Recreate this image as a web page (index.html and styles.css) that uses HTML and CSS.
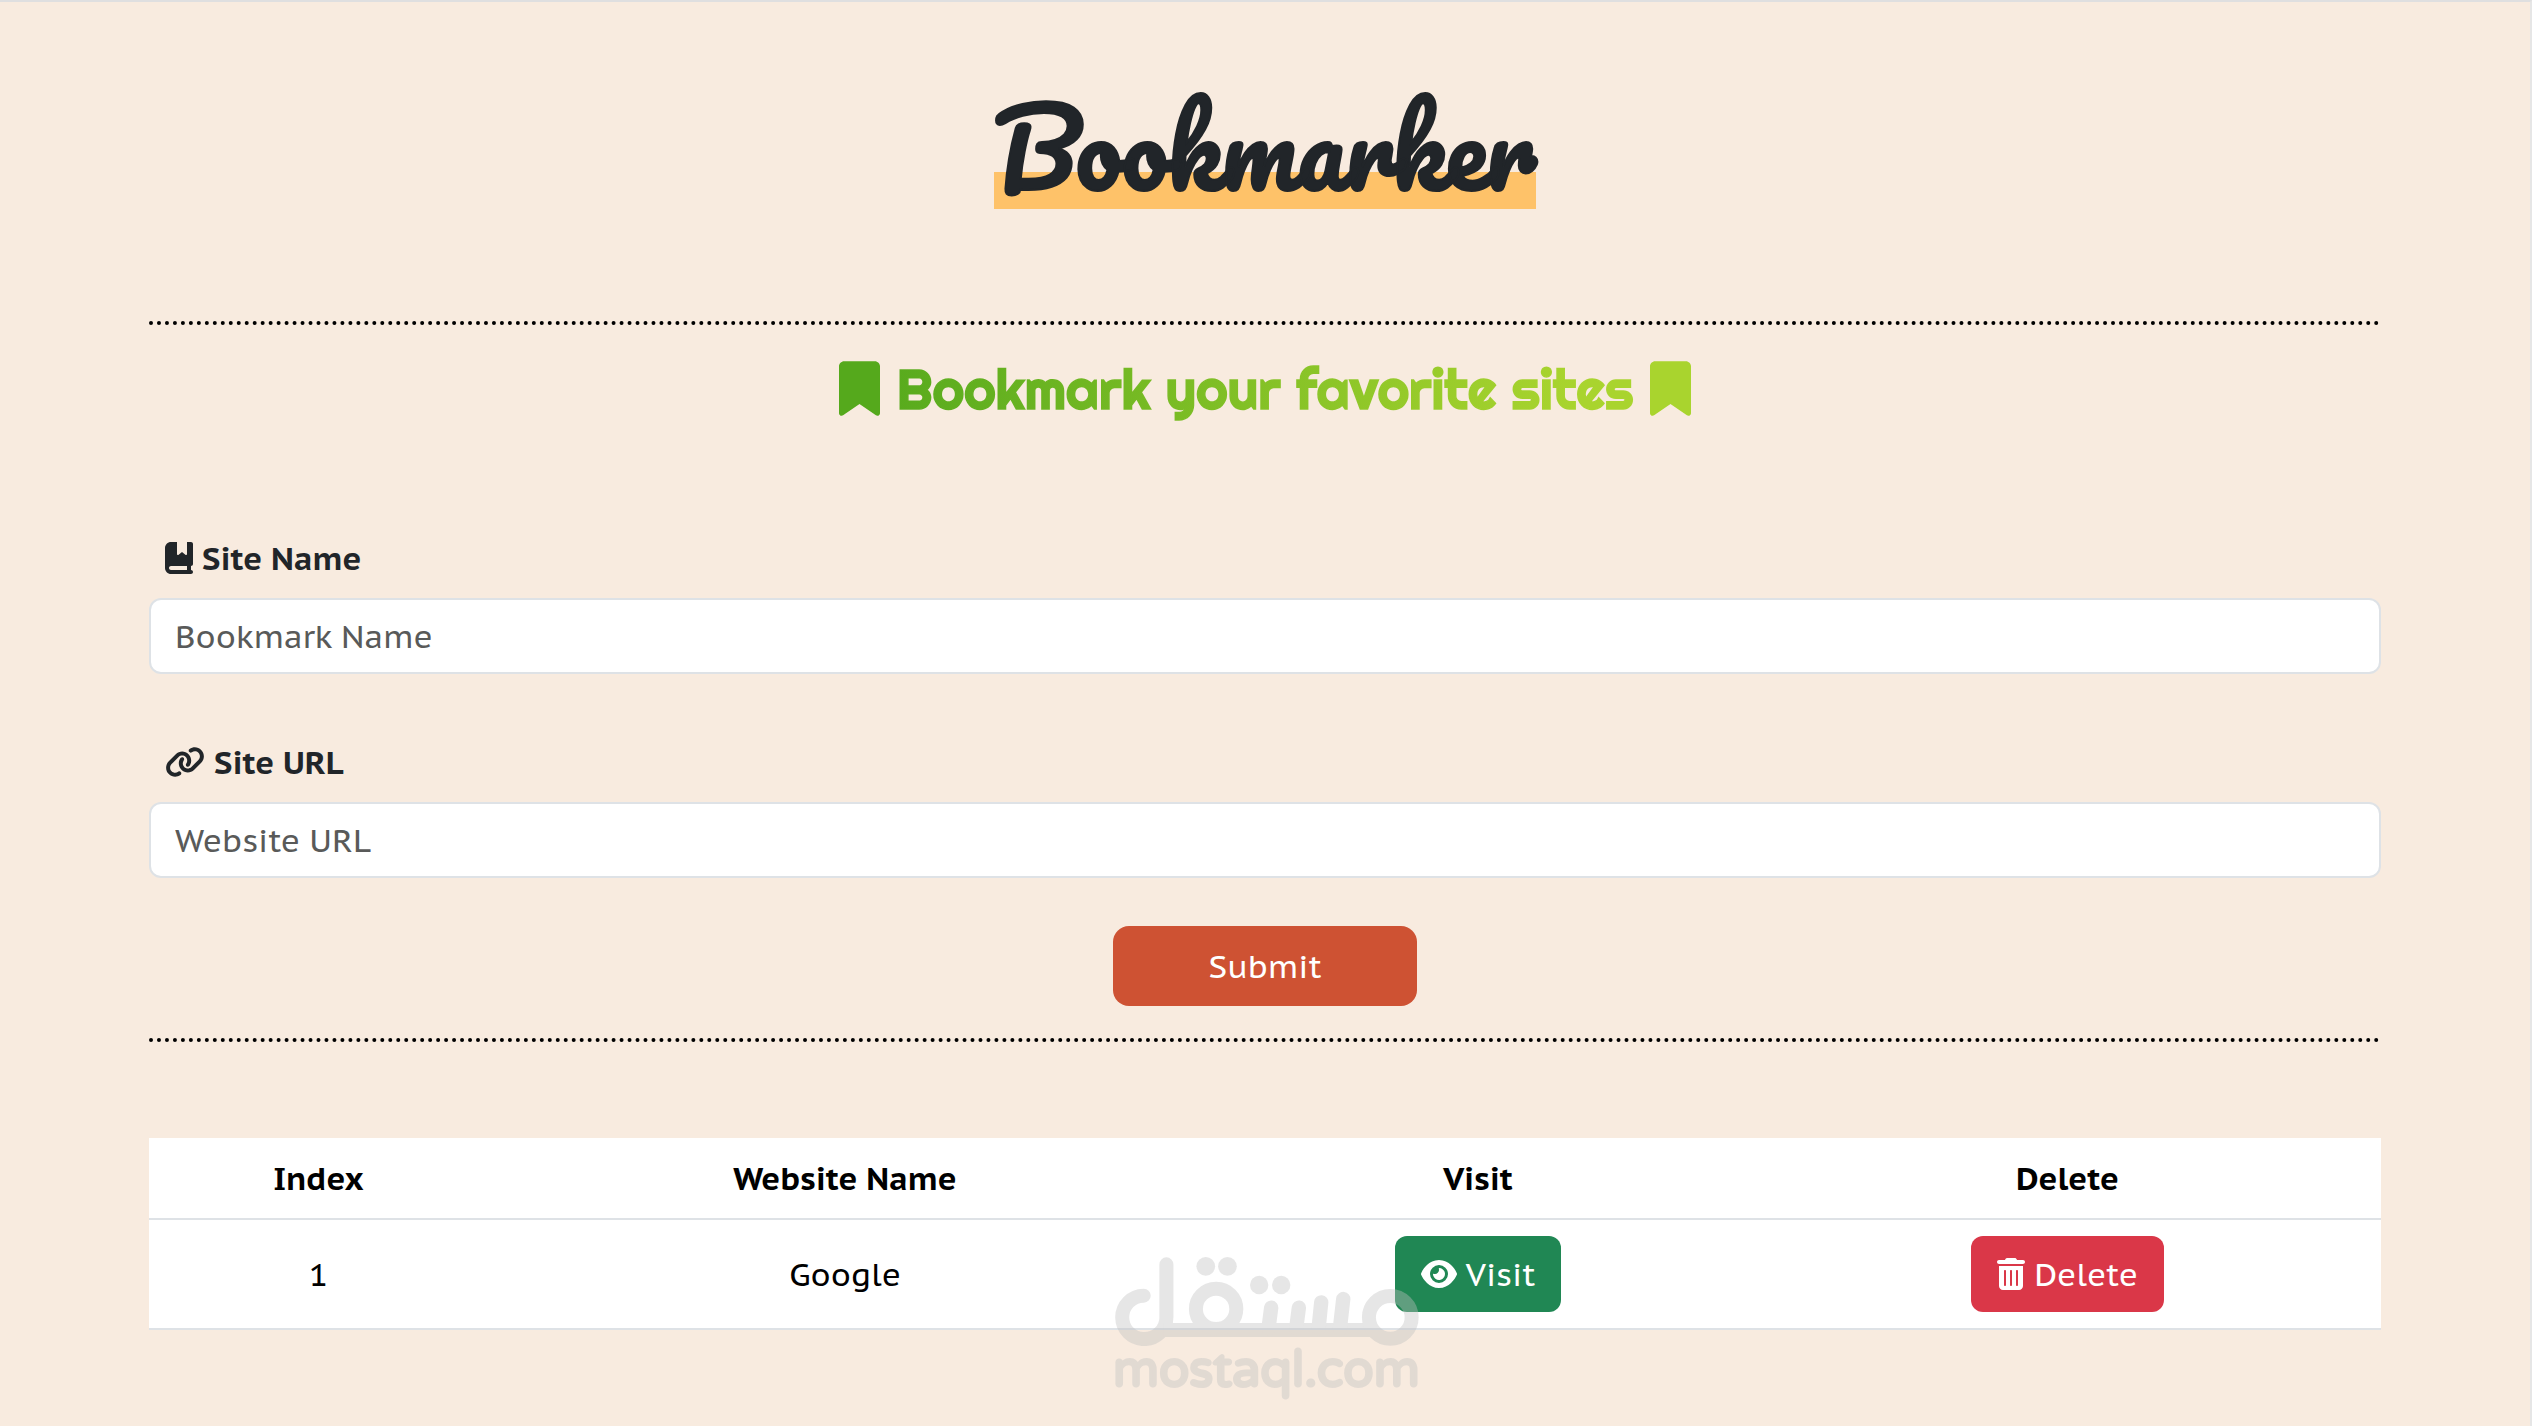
FILE: index.html
```
<!DOCTYPE html>
<html lang="en">
<head>
    <meta charset="UTF-8">
    <meta name="viewport" content="width=device-width, initial-scale=1.0">
    <title>Bookmarker</title>
    <link rel="stylesheet" href="styles.css">
</head>
<body>
    <div class="container">
        <header>
            <h1>Bookmarker</h1>
        </header>

        <hr>

        <h2>
            <svg viewBox="0 0 384 512" fill="#55a91c"><path d="M0 48V487.700C0 501.100 10.900 512 24.300 512c5 0 9.900-1.500 14-4.400L192 400 345.700 507.600c4.100 2.900 9 4.400 14 4.400c13.400 0 24.300-10.900 24.300-24.300V48c0-26.500-21.500-48-48-48H48C21.500 0 0 21.500 0 48z"/></svg>
            <span>Bookmark your favorite sites</span>
            <svg viewBox="0 0 384 512" fill="#a9d42e"><path d="M0 48V487.700C0 501.100 10.900 512 24.300 512c5 0 9.900-1.500 14-4.400L192 400 345.700 507.600c4.100 2.900 9 4.400 14 4.400c13.400 0 24.300-10.900 24.300-24.300V48c0-26.500-21.500-48-48-48H48C21.500 0 0 21.500 0 48z"/></svg>
        </h2>

        <form>
            <label for="siteName">
                <svg class="icon" viewBox="0 0 448 512"><path d="M0 96C0 43 43 0 96 0h96V190.700c0 13.400 15.500 20.900 26 12.500L272 160l54 43.200c10.500 8.400 26 .9 26-12.500V0h32 32c17.700 0 32 14.300 32 32V352c0 17.700-14.300 32-32 32v64c17.700 0 32 14.300 32 32s-14.300 32-32 32H384 96c-53 0-96-43-96-96V96zM64 416c0 17.700 14.300 32 32 32H352V384H96c-17.700 0-32 14.300-32 32z"/></svg>
                <span>Site Name</span>
            </label>
            <input type="text" id="siteName" placeholder="Bookmark Name">

            <label for="siteUrl">
                <svg class="icon" viewBox="0 0 640 512"><path d="M579.800 267.700c56.500-56.500 56.500-148 0-204.500c-50-50-128.800-56.500-186.300-15.400l-1.600 1.100c-14.400 10.300-17.700 30.300-7.400 44.600s30.300 17.700 44.600 7.400l1.600-1.100c32.100-22.900 76-19.300 103.800 8.600c31.500 31.500 31.500 82.500 0 114L422.300 334.800c-31.500 31.500-82.500 31.500-114 0c-27.900-27.900-31.500-71.800-8.600-103.800l1.100-1.600c10.300-14.400 6.900-34.400-7.400-44.600s-34.400-6.900-44.600 7.400l-1.100 1.600C206.500 251.200 213 330 263 380c56.500 56.500 148 56.500 204.500 0L579.800 267.700zM60.200 244.300c-56.500 56.500-56.500 148 0 204.500c50 50 128.800 56.500 186.300 15.400l1.600-1.100c14.400-10.300 17.700-30.300 7.400-44.600s-30.300-17.700-44.600-7.400l-1.600 1.100c-32.100 22.900-76 19.300-103.800-8.600C74 372 74 321 105.500 289.500L217.700 177.200c31.500-31.500 82.500-31.500 114 0c27.900 27.900 31.500 71.800 8.600 103.900l-1.100 1.600c-10.300 14.400-6.900 34.400 7.400 44.600s34.400 6.900 44.600-7.400l1.100-1.600C433.500 260.800 427 182 377 132c-56.500-56.500-148-56.500-204.500 0L60.200 244.300z"/></svg>
                <span>Site URL</span>
            </label>
            <input type="text" id="siteUrl" placeholder="Website URL">

            <button type="button" class="submit">Submit</button>
        </form>

        <hr>

        <table>
            <thead>
                <tr>
                    <th class="col-index">Index</th>
                    <th class="col-name">Website Name</th>
                    <th class="col-visit">Visit</th>
                    <th class="col-delete">Delete</th>
                </tr>
            </thead>
            <tbody>
                <tr>
                    <td>1</td>
                    <td>Google</td>
                    <td>
                        <button type="button" class="btn btn-visit">
                            <svg class="icon" viewBox="0 0 576 512"><path d="M288 32c-80.800 0-145.500 36.800-192.600 80.600C48.600 156 17.300 208 2.500 243.700c-3.300 7.900-3.300 16.700 0 24.600C17.300 304 48.600 356 95.400 399.400C142.500 443.200 207.200 480 288 480s145.500-36.800 192.600-80.600c46.800-43.500 78.100-95.400 93-131.100c3.300-7.900 3.300-16.700 0-24.600c-14.900-35.700-46.200-87.700-93-131.100C433.500 68.800 368.800 32 288 32zM144 256a144 144 0 1 1 288 0 144 144 0 1 1-288 0zm144-64c0 35.300-28.700 64-64 64c-7.100 0-13.900-1.200-20.300-3.300c-5.500-1.800-11.900 1.600-11.700 7.400c.3 6.900 1.300 13.800 3.200 20.700c13.700 51.200 66.400 81.600 117.600 67.900s81.600-66.400 67.900-117.600c-11.100-41.500-47.800-69.400-88.600-71.100c-5.800-.2-9.200 6.100-7.400 11.700c2.100 6.400 3.300 13.200 3.300 20.300z"/></svg>
                            <span>Visit</span>
                        </button>
                    </td>
                    <td>
                        <button type="button" class="btn btn-delete">
                            <svg class="icon" viewBox="0 0 448 512"><path d="M135.200 17.700C140.600 6.800 151.700 0 163.800 0H284.200c12.100 0 23.200 6.800 28.600 17.700L320 32h96c17.700 0 32 14.300 32 32s-14.300 32-32 32H32C14.300 96 0 81.700 0 64S14.300 32 32 32h96l7.200-14.300zM32 128H416V448c0 35.300-28.700 64-64 64H96c-35.300 0-64-28.700-64-64V128zm96 64c-8.800 0-16 7.200-16 16V432c0 8.800 7.200 16 16 16s16-7.200 16-16V208c0-8.800-7.200-16-16-16zm96 0c-8.800 0-16 7.200-16 16V432c0 8.800 7.200 16 16 16s16-7.200 16-16V208c0-8.800-7.200-16-16-16zm96 0c-8.800 0-16 7.200-16 16V432c0 8.800 7.200 16 16 16s16-7.200 16-16V208c0-8.800-7.200-16-16-16z"/></svg>
                            <span>Delete</span>
                        </button>
                    </td>
                </tr>
            </tbody>
        </table>
    </div>

    <div class="watermark">
        <svg viewBox="105 111 911 268" fill="none" stroke="#c1c1c1" stroke-width="42" stroke-linecap="round">
            <path d="M191 227A65 65 0 0 0 192 357A67 65 0 0 0 259 292V133"/>
            <path d="M250 330H880" stroke-linecap="butt"/>
            <circle cx="408" cy="266.500" r="60.500"/>
            <path d="M573 263L565 325M656 263L648 325M723 247L715 325M789 237L779 325" stroke-width="43"/>
            <circle cx="930" cy="292" r="64"/>
            <g fill="#c1c1c1" stroke="none">
                <circle cx="377" cy="139" r="28"/>
                <circle cx="442" cy="139" r="28"/>
                <circle cx="537" cy="195" r="27.500"/>
                <circle cx="603" cy="195" r="27.500"/>
            </g>
        </svg>
        <p>mostaql.com</p>
    </div>
</body>
</html>
```
FILE: styles.css
```
* {
    box-sizing: border-box;
}

html {
    background-color: #fff;
    padding-right: 2px;
}

body {
    position: relative;
    min-height: 100vh;
    margin: 0;
    background-color: #f8ebdf;
    border-top: 2px solid #dfdfe0;
    border-right: 2px solid #e6e6e6;
    color: #212529;
    font-family: "PT Sans Caption", "Noto Sans", sans-serif;
    font-size: 32px;
    line-height: 48px;
}

.container {
    width: 2232px;
    margin: 0 auto;
}

header {
    display: flex;
    justify-content: center;
    padding: 85px 0 112px;
}

h1 {
    width: 542px;
    height: 122px;
    margin: 0;
    background: linear-gradient(#fec269, #fec269) bottom / 100% 37px no-repeat;
    font-family: Pacifico, Lato, cursive;
    font-size: 102.3px;
    font-weight: 400;
    line-height: 119px;
    text-align: center;
    white-space: nowrap;
    -webkit-text-stroke: 2px #212529;
}

hr {
    margin: 0;
    border: none;
    border-top: 4px dotted #000;
}

h2 {
    display: flex;
    align-items: flex-start;
    width: 852px;
    margin: 33px auto 112px;
    font-family: Righteous, Inter, sans-serif;
    font-size: 54.2px;
    font-weight: 400;
    line-height: 64px;
    white-space: nowrap;
}

h2 svg {
    width: 41px;
    height: 55px;
    margin-top: 3px;
}

h2 span {
    flex: 1;
    text-align: center;
    background: linear-gradient(to right, #57aa1d, #a9d42e 90%);
    -webkit-background-clip: text;
    background-clip: text;
    color: transparent;
    -webkit-text-stroke: 1.5px transparent;
}

.icon {
    height: 32px;
    fill: currentColor;
}

form {
    display: flex;
    flex-direction: column;
}

label {
    display: flex;
    align-items: center;
    gap: 9px;
    margin-bottom: 16px;
    padding-left: 16px;
    font-weight: 700;
}

input {
    height: 76px;
    margin-bottom: 64px;
    padding: 12px 24px;
    background-color: #fff;
    border: 2px solid #dee2e6;
    border-radius: 12px;
    font: inherit;
}

input:last-of-type {
    margin-bottom: 48px;
}

input::placeholder {
    color: #595a59;
}

button {
    border: none;
    color: #fff;
    font: inherit;
    cursor: pointer;
}

.submit {
    align-self: center;
    width: 304px;
    height: 80px;
    margin-bottom: 32px;
    background-color: #ce5233;
    border-radius: 16px;
}

table {
    width: 100%;
    margin-top: 96px;
    table-layout: fixed;
    border-collapse: separate;
    border-spacing: 0;
    background-color: #fff;
    color: #000;
    text-align: center;
}

th, td {
    padding: 16px;
    border-bottom: 2px solid #dee2e6;
    vertical-align: middle;
}

.col-index {
    width: 339px;
}

.col-name {
    width: 714px;
}

.col-visit {
    width: 552px;
}

.btn {
    display: inline-flex;
    align-items: center;
    gap: 9px;
    height: 76px;
    padding: 0 26px;
    border-radius: 12px;
    vertical-align: top;
}

.btn-visit {
    background-color: #208754;
}

.btn-delete {
    background-color: #da3748;
}

/* Watermark over the table */
.watermark {
    position: absolute;
    top: 1255px;
    left: 1115px;
    width: 304px;
    opacity: 0.4;
    color: #c1c1c1;
    pointer-events: none;
}

.watermark svg {
    display: block;
    width: 100%;
}

.watermark p {
    margin: -5px 0 0 -2px;
    font-family: "Varela Round", "Liberation Sans", sans-serif;
    font-size: 50px;
    font-weight: 700;
    line-height: 58px;
    white-space: nowrap;
    -webkit-text-stroke: 1.5px #c1c1c1;
}
```
